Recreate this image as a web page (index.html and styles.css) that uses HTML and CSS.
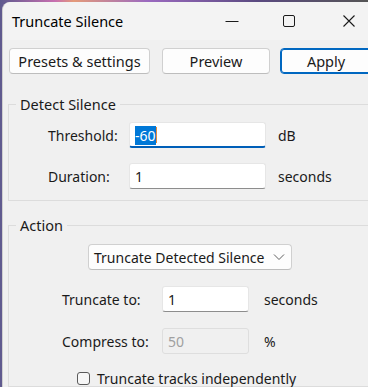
FILE: index.html
```html
<!DOCTYPE html>
<html lang="en">
<head>
    <meta charset="UTF-8">
    <meta name="viewport" content="width=device-width, initial-scale=1.0">
    <title>Truncate Silence</title>
    <link rel="stylesheet" href="styles.css">
</head>
<body>
    <div class="window">
        <div class="titlebar">
            <span class="title">Truncate Silence</span>
            <div class="controls">
                <span class="ctl">
                    <svg width="14" height="14" viewBox="0 0 14 14"><path d="M0.5 7.5h13" stroke="#1a1a1a" stroke-width="1"/></svg>
                </span>
                <span class="ctl">
                    <svg width="14" height="14" viewBox="0 0 14 14"><rect x="1.5" y="1.5" width="11" height="11" rx="1.5" fill="none" stroke="#1a1a1a" stroke-width="1"/></svg>
                </span>
                <span class="ctl ctl-close">
                    <svg width="14" height="14" viewBox="0 0 14 14"><path d="M1.5 1.5l11 11M12.5 1.5l-11 11" stroke="#1a1a1a" stroke-width="1.1"/></svg>
                </span>
            </div>
        </div>

        <div class="toolbar">
            <button class="btn btn-presets">Presets &amp; settings</button>
            <button class="btn btn-preview">Preview</button>
            <button class="btn btn-apply">Apply</button>
        </div>

        <fieldset class="group group-detect">
            <legend>Detect Silence</legend>
            <div class="row">
                <span class="lbl lbl-detect">Threshold:</span>
                <div class="field field-detect focused"><span class="sel">-60</span><span class="caret"></span></div>
                <span class="unit">dB</span>
            </div>
            <div class="row">
                <span class="lbl lbl-detect">Duration:</span>
                <div class="field field-detect">1</div>
                <span class="unit">seconds</span>
            </div>
        </fieldset>

        <fieldset class="group group-action">
            <legend>Action</legend>
            <div class="row row-select">
                <div class="select">
                    <span>Truncate Detected Silence</span>
                    <svg width="12" height="8" viewBox="0 0 12 8"><path d="M1 1.5l5 5 5-5" fill="none" stroke="#5f5f5f" stroke-width="1"/></svg>
                </div>
            </div>
            <div class="row">
                <span class="lbl lbl-action">Truncate to:</span>
                <div class="field field-action">1</div>
                <span class="unit unit-action">seconds</span>
            </div>
            <div class="row">
                <span class="lbl lbl-action">Compress to:</span>
                <div class="field field-action disabled">50</div>
                <span class="unit unit-action">%</span>
            </div>
            <label class="check">
                <span class="box"></span>
                Truncate tracks independently
            </label>
        </fieldset>
    </div>
</body>
</html>
```

FILE: styles.css
```css
html, body { margin: 0; height: 100%; }
body {
    overflow: hidden;
    background: linear-gradient(90deg, #5e5a8e 0%, #c86fb0 15%, #e49a7a 20%, #9b6ac0 40%, #5a4a80 70%, #555 100%);
    font-family: "Noto Sans", "Open Sans", sans-serif;
    font-size: 14px;
    color: #1a1a1a;
}
.window {
    margin: 2px 0 0 2px;
    width: 365px;
    height: 385px;
    overflow: hidden;
    background: #f0f0f0;
    border-top-left-radius: 8px;
    border-left: 1px solid #cfcfcf;
}
.titlebar {
    height: 38px;
    display: flex;
    align-items: center;
    justify-content: space-between;
    background: #f3f3f3;
    border-top-left-radius: 8px;
}
.title { margin-left: 9px; font-size: 14.5px; color: #000; }
.controls { display: flex; margin-right: -9px; }
.ctl { width: 57px; display: flex; justify-content: center; }
.ctl-close { margin-left: 3px; }

.toolbar { display: flex; gap: 12px; padding: 8px 0 0 6px; }
.btn {
    flex: none;
    height: 26px;
    padding: 0;
    font: inherit;
    font-size: 14.5px;
    color: #1a1a1a;
    background: #fdfdfd;
    border: 1px solid #d0d0d0;
    border-bottom-color: #bdbdbd;
    border-radius: 4px;
}
.btn-presets { width: 141px; }
.btn-preview { width: 108px; }
.btn-apply { width: 92px; margin-left: -2px; border: 1px solid #0067c0; box-shadow: inset 0 0 0 1px #0067c0; }

.group {
    margin: 0 -20px 0 5px;
    padding: 0;
    border: 1px solid #dcdcdc;
    border-radius: 0;
}
.group legend { margin-left: 7px; padding: 0 4px 0 4px; font-size: 14.5px; }
.group-detect { margin-top: 20px; height: 105px; }
.group-action { margin-top: 14px; height: 170px; }

.row { display: flex; align-items: center; height: 26px; }
.group-detect .row:first-of-type { margin-top: 8px; }
.group-detect .row + .row { margin-top: 15px; }
.lbl-detect { width: 81px; margin-left: 39px; }
.field {
    height: 26px;
    box-sizing: border-box;
    background: #fff;
    border: 1px solid #e6e6e6;
    border-bottom-color: #8d8d8d;
    border-radius: 3px;
    display: flex;
    align-items: center;
    padding-left: 5px;
}
.field-detect { width: 137px; }
.focused { border-bottom: 2px solid #005fb8; padding-top: 1px; }
.sel { background: #0078d7; color: #fff; }
.caret { width: 1px; height: 16px; background: #e48a3c; }
.unit { margin-left: 12px; }
.unit-action { margin-left: 15px; }

.row-select { justify-content: flex-start; margin-top: 9px; }
.select {
    margin-left: 79px;
    width: 204px;
    height: 26px;
    box-sizing: border-box;
    display: flex;
    align-items: center;
    justify-content: space-between;
    padding: 0 6px 0 5px;
    background: #fdfdfd;
    border: 1px solid #d0d0d0;
    border-bottom-color: #bdbdbd;
    border-radius: 4px;
}
.group-action .row-select + .row { margin-top: 13px; }
.group-action .row + .row { margin-top: 16px; }
.lbl-action { width: 100px; margin-left: 53px; }
.field-action { width: 87px; }
.disabled { background: #f0f0f0; border: 1px solid #dedede; color: #a0a0a0; }
.check { display: flex; align-items: center; gap: 7px; margin: 15px 0 0 68px; }
.box {
    width: 13px;
    height: 13px;
    box-sizing: border-box;
    border: 1px solid #5a5a5a;
    border-radius: 3px;
    background: #f7f7f7;
}
```
